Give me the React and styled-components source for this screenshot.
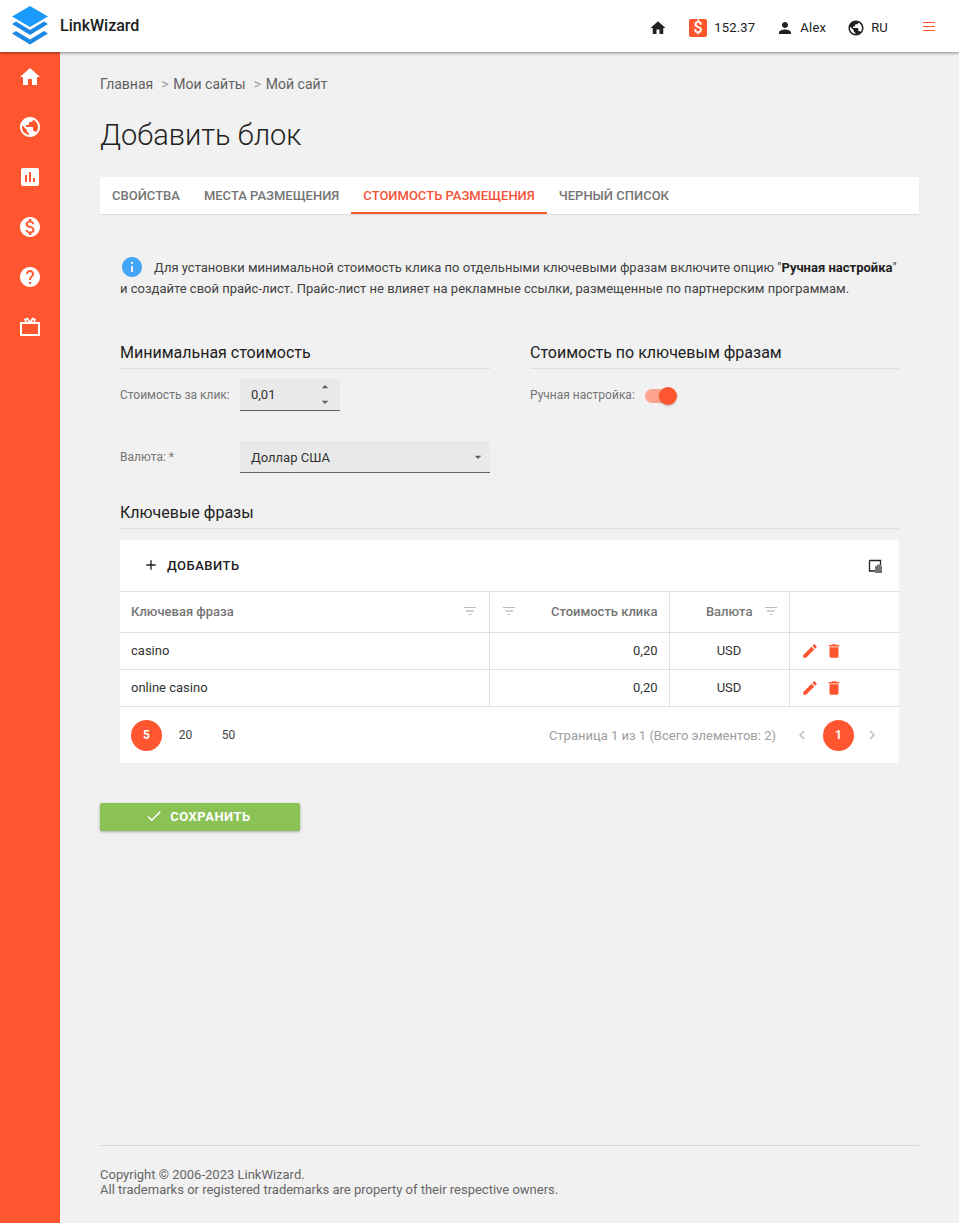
import React from "react";
import styled, { createGlobalStyle } from "styled-components";

const ORANGE = "#ff5630";

const GlobalStyle = createGlobalStyle`
  html, body { margin: 0; padding: 0; }
  body {
    background: #f1f1f1;
    font-family: Roboto, "Noto Sans", sans-serif;
    color: #212121;
  }
  * { box-sizing: border-box; }
`;

const paths = {
  home: "M10 20v-6h4v6h5v-8h3L12 3 2 12h3v8z",
  globe: "M12 2C6.48 2 2 6.48 2 12s4.48 10 10 10 10-4.48 10-10S17.52 2 12 2zm-1 17.93c-3.95-.49-7-3.85-7-7.93 0-.62.08-1.21.21-1.79L9 15v1c0 1.1.9 2 2 2v1.93zm6.9-2.54c-.26-.81-1-1.39-1.9-1.39h-1v-3c0-.55-.45-1-1-1H8v-2h2c.55 0 1-.45 1-1V7h2c1.1 0 2-.9 2-2v-.41c2.93 1.19 5 4.06 5 7.41 0 2.08-.8 3.97-2.1 5.39z",
  chart: "M19 3H5c-1.1 0-2 .9-2 2v14c0 1.1.9 2 2 2h14c1.1 0 2-.9 2-2V5c0-1.1-.9-2-2-2zM9 17H7v-7h2v7zm4 0h-2V7h2v10zm4 0h-2v-4h2v4z",
  money: "M12 2C6.48 2 2 6.48 2 12s4.48 10 10 10 10-4.48 10-10S17.52 2 12 2zm1.41 16.09V20h-2.67v-1.93c-1.71-.36-3.16-1.46-3.27-3.4h1.96c.1 1.05.82 1.87 2.65 1.87 1.96 0 2.4-.98 2.4-1.59 0-.83-.44-1.61-2.67-2.14-2.48-.6-4.18-1.62-4.18-3.67 0-1.72 1.39-2.84 3.11-3.21V4h2.67v1.95c1.86.45 2.79 1.86 2.85 3.39H14.3c-.05-1.11-.64-1.87-2.22-1.87-1.5 0-2.4.68-2.4 1.64 0 .84.65 1.39 2.67 1.91s4.18 1.39 4.18 3.91c-.01 1.83-1.38 2.83-3.12 3.16z",
  help: "M12 2C6.48 2 2 6.48 2 12s4.48 10 10 10 10-4.48 10-10S17.52 2 12 2zm1 17h-2v-2h2v2zm2.07-7.75l-.9.92C13.45 12.9 13 13.5 13 15h-2v-.5c0-1.1.45-2.1 1.17-2.83l1.24-1.26c.37-.36.59-.86.59-1.41 0-1.1-.9-2-2-2s-2 .9-2 2H8c0-2.21 1.79-4 4-4s4 1.79 4 4c0 .88-.36 1.68-.93 2.25z",
  person: "M12 12c2.21 0 4-1.79 4-4s-1.79-4-4-4-4 1.79-4 4 1.79 4 4 4zm0 2c-2.67 0-8 1.34-8 4v2h16v-2c0-2.66-5.33-4-8-4z",
  edit: "M3 17.25V21h3.75L17.81 9.94l-3.75-3.75L3 17.25zM20.71 7.04c.39-.39.39-1.02 0-1.41l-2.34-2.34c-.39-.39-1.02-.39-1.41 0l-1.83 1.83 3.75 3.75 1.83-1.83z",
  trash: "M6 19c0 1.1.9 2 2 2h8c1.1 0 2-.9 2-2V7H6v12zM19 4h-3.5l-1-1h-5l-1 1H5v2h14V4z",
  check: "M9 16.17L4.83 12l-1.42 1.41L9 19 21 7l-1.41-1.41z",
  add: "M19 13h-6v6h-2v-6H5v-2h6V5h2v6h6v2z",
  left: "M15.41 7.41L14 6l-6 6 6 6 1.41-1.41L10.83 12z",
  right: "M10 6L8.59 7.41 13.17 12l-4.58 4.59L10 18l6-6z",
  filter: "M3 6h18v1.300H3zM6 11.350h12v1.300H6zM10 16.700h4v1.300h-4z",
  info: "M12 2C6.48 2 2 6.48 2 12s4.48 10 10 10 10-4.48 10-10S17.52 2 12 2zm1 15h-2v-6h2v6zm0-8h-2V7h2v2z",
  dropdown: "M7 10l5 5 5-5z",
  dropup: "M7 14l5-5 5 5z",
};

const Svg = styled.svg`
  display: block;
  flex: none;
  fill: currentColor;
`;

const Icon = ({ name, size = 24 }) => (
  <Svg viewBox="0 0 24 24" width={size} height={size}>
    <path d={paths[name]} />
  </Svg>
);

const GiftIcon = () => (
  <svg viewBox="0 0 24 24" width="24" height="24" fill="none" stroke="currentColor" strokeWidth="2" style={{ display: "block" }}>
    <path d="M3 8h18v12H3z" />
    <path d="M12 8 9.500 3.500 7 4.500 8.500 8M12 8l2.500-4.500L17 4.500 15.500 8" strokeWidth="1.700" />
  </svg>
);

const ColumnsIcon = () => (
  <svg viewBox="0 0 16 16" width="16" height="16" style={{ display: "block" }}>
    <path d="M2.500 2.500h11v5M8 13H2.500V2.500" fill="none" stroke="#212121" strokeWidth="1.300" />
    <path d="M8 8h7v7H8z" fill="#757575" />
    <path d="M10 6.500h3V8h-3z" fill="#757575" />
  </svg>
);

const Page = styled.div`
  display: flex;
  flex-direction: column;
  min-height: 1223px;
`;

const Header = styled.header`
  position: relative;
  z-index: 2;
  height: 52px;
  display: flex;
  align-items: center;
  background: #fff;
  box-shadow: 0 1px 3px rgba(0, 0, 0, 0.45);
  padding: 0 24px 0 11px;
`;

const Brand = styled.div`
  font-size: 16px;
  font-weight: 500;
  color: #1c1c1c;
  margin-left: 11px;
  margin-right: auto;
  padding-bottom: 1px;
`;

const HeaderItem = styled.div`
  display: flex;
  align-items: center;
  gap: ${(p) => p.$gap || 6}px;
  margin-left: ${(p) => p.$left}px;
  font-size: 13px;
  letter-spacing: 0.2px;
  color: #212121;
  padding-top: 3px;
`;

const DollarBox = styled.span`
  width: 18px;
  height: 18px;
  border-radius: 2px;
  background: ${ORANGE};
  color: #fff;
  font-size: 16px;
  font-weight: 500;
  line-height: 18px;
  text-align: center;
`;

const Burger = styled.span`
  display: block;
  position: relative;
  width: 12px;
  height: 9px;
  margin: 1px 0 0 35px;
  border-top: 1px solid ${ORANGE};
  border-bottom: 1px solid ${ORANGE};
  &::after {
    content: "";
    position: absolute;
    left: 0;
    right: 0;
    top: 3px;
    height: 1px;
    background: ${ORANGE};
  }
`;

const Body = styled.div`
  flex: 1;
  display: flex;
`;

const Sidebar = styled.nav`
  width: 60px;
  flex: none;
  background: ${ORANGE};
  color: #fff;
`;

const SideItem = styled.div`
  height: 50px;
  display: flex;
  align-items: center;
  justify-content: center;
`;

const Main = styled.main`
  flex: 1;
  min-width: 0;
  display: flex;
  flex-direction: column;
  padding: 24px 40px 26px;
`;

const Breadcrumbs = styled.div`
  display: flex;
  font-size: 14px;
  line-height: 16px;
  color: #616161;
`;

const Crumb = styled.span`
  &:not(:first-child)::before {
    content: ">";
    color: #9e9e9e;
    margin: 0 4.900px 0 7.900px;
  }
`;

const Title = styled.h1`
  margin: 26px 0 24px;
  font-size: 29px;
  line-height: 35px;
  font-weight: 300;
  color: #212121;
`;

const Tabs = styled.div`
  display: flex;
  height: 37px;
  background: #fff;
  box-shadow: 0 1px 1px rgba(0, 0, 0, 0.08);
`;

const Tab = styled.div`
  padding: 0 12px;
  font-size: 13px;
  line-height: 37px;
  font-weight: 500;
  text-transform: uppercase;
  color: ${(p) => (p.$active ? "#f4533a" : "#757575")};
  border-bottom: 2px solid ${(p) => (p.$active ? ORANGE : "transparent")};
`;

const Content = styled.div`
  padding: 43px 20px 0;
`;

const Info = styled.p`
  margin: 0;
  font-size: 13px;
  line-height: 21px;
  color: #424242;
  b { font-weight: 700; color: #212121; }
`;

const InfoIcon = styled.span`
  display: inline-block;
  height: 14px;
  vertical-align: -2px;
  margin-right: 10px;
  color: #42a5f5;
  & > svg { margin-top: -5px; }
`;

const Columns = styled.div`
  display: grid;
  grid-template-columns: 370px 369px;
  column-gap: 40px;
  margin-top: 44px;
`;

const SectionTitle = styled.h2`
  margin: 0;
  height: 26px;
  font-size: 16px;
  line-height: 19px;
  font-weight: 400;
  color: #212121;
  border-bottom: 1px solid #dedede;
`;

const Row = styled.div`
  display: flex;
  align-items: center;
  margin-top: ${(p) => p.$top}px;
`;

const Label = styled.span`
  width: 120px;
  flex: none;
  font-size: 12px;
  color: #757575;
`;

const NumberField = styled.div`
  width: 100px;
  height: 32px;
  display: flex;
  align-items: center;
  justify-content: space-between;
  padding: 0 7px 0 11px;
  background: #e9e9e9;
  border-bottom: 1px solid #616161;
  font-size: 13px;
  color: #333;
`;

const Spinner = styled.span`
  display: flex;
  flex-direction: column;
  gap: 1px;
  color: #616161;
  & > svg { margin: -1px 0; }
`;

const SelectField = styled(NumberField)`
  width: 250px;
  padding: 1px 4px 0 11px;
  & > svg { color: #616161; }
`;

const SwitchLabel = styled.span`
  font-size: 12px;
  color: #757575;
`;

const Switch = styled.span`
  position: relative;
  display: block;
  width: 27px;
  height: 14px;
  margin: 3px 0 0 10px;
  border-radius: 7px;
  background: #ffa48e;
`;

const Thumb = styled.span`
  position: absolute;
  top: -2px;
  right: -5px;
  width: 18px;
  height: 18px;
  border-radius: 50%;
  background: ${ORANGE};
  box-shadow: 0 1px 2px rgba(0, 0, 0, 0.25);
`;

const KeywordsTitle = styled(SectionTitle)`
  margin-top: 30px;
`;

const Card = styled.div`
  margin-top: 11px;
  background: #fff;
`;

const Toolbar = styled.div`
  height: 51px;
  display: flex;
  align-items: center;
  justify-content: space-between;
  padding: 0 16px 0 23px;
`;

const AddButton = styled.div`
  display: flex;
  align-items: center;
  gap: 8px;
  margin-top: -1px;
  font-size: 13px;
  font-weight: 500;
  letter-spacing: 0.5px;
  text-transform: uppercase;
  color: #212121;
`;

const Grid = styled.table`
  width: 100%;
  table-layout: fixed;
  border-collapse: collapse;
  font-size: 13px;
  border-top: 1px solid #e0e0e0;
`;

const Th = styled.th`
  height: 41px;
  padding: 0 11px 2px;
  font-weight: 500;
  color: #757575;
  border-bottom: 1px solid #e0e0e0;
  & + & { border-left: 1px solid #e0e0e0; }
`;

const HeadInner = styled.div`
  display: flex;
  align-items: center;
  justify-content: ${(p) => p.$justify || "space-between"};
  gap: 10px;
  margin-right: ${(p) => (p.$justify ? -1 : 0)}px;
  color: #757575;
  & > svg { color: #a6a6a6; }
`;

const Td = styled.td`
  height: 37px;
  padding: 0 11px 2px;
  color: #333;
  text-align: ${(p) => p.$align || "left"};
  border-bottom: 1px solid #e0e0e0;
  & + & { border-left: 1px solid #e0e0e0; }
`;

const Actions = styled.div`
  display: flex;
  gap: 6px;
  margin-top: 2px;
  color: ${ORANGE};
`;

const Pager = styled.div`
  height: 56px;
  display: flex;
  align-items: center;
  padding: 0 11px;
  font-size: 12px;
  color: #424242;
`;

const PageCircle = styled.span`
  width: 31px;
  height: 31px;
  flex: none;
  display: flex;
  align-items: center;
  justify-content: center;
  border-radius: 50%;
  background: ${ORANGE};
  color: #fff;
  font-weight: 700;
`;

const PageSize = styled.span`
  width: 43px;
  text-align: center;
  &:nth-child(2) { margin-left: 2px; }
`;

const PageInfo = styled.span`
  margin-left: auto;
  margin-right: 12px;
  font-size: 13px;
  color: #9e9e9e;
`;

const PageArrow = styled.span`
  color: #bdbdbd;
  margin: 0 ${(p) => p.$right}px 0 ${(p) => p.$left}px;
`;

const SaveButton = styled.div`
  width: 200px;
  height: 28px;
  margin-top: 40px;
  padding: 0 4px 2px 0;
  display: flex;
  align-items: center;
  justify-content: center;
  gap: 7px;
  background: #8bc255;
  border-radius: 2px;
  box-shadow: 0 1px 3px rgba(0, 0, 0, 0.3);
  color: #fff;
  font-size: 13px;
  font-weight: 700;
  letter-spacing: 0.5px;
  text-transform: uppercase;
`;

const Footer = styled.footer`
  margin-top: auto;
  padding-top: 21px;
  border-top: 1px solid #d8d8d8;
  font-size: 13px;
  line-height: 15px;
  color: #666;
`;

const Logo = () => (
  <svg width="38" height="42" viewBox="0 0 38 42" style={{ flex: "none" }}>
    <path d="M19 1 37 11.500 19 22 1 11.500z" fill="#1a9bfc" />
    <path d="M5 16.500 19 25 33 16.500 37 19 19 30 1 19z" fill="#1e88e5" />
    <path d="M5 26 19 34.500 33 26 37 28.500 19 39.500 1 28.500z" fill="#1e88e5" />
  </svg>
);

const sideNav = ["home", "globe", "chart", "money", "help"];

const keywords = ["casino", "online casino"];

export default function App() {
  return (
    <Page>
      <GlobalStyle />
      <Header>
        <Logo />
        <Brand>LinkWizard</Brand>
        <HeaderItem><Icon name="home" size={18} /></HeaderItem>
        <HeaderItem $left={22} $gap={7}><DollarBox>$</DollarBox>152.37</HeaderItem>
        <HeaderItem $left={21}><Icon name="person" size={18} />Alex</HeaderItem>
        <HeaderItem $left={21}><Icon name="globe" size={18} />RU</HeaderItem>
        <Burger />
      </Header>
      <Body>
        <Sidebar>
          {sideNav.map((name) => (
            <SideItem key={name}><Icon name={name} /></SideItem>
          ))}
          <SideItem><GiftIcon /></SideItem>
        </Sidebar>
        <Main>
          <Breadcrumbs>
            <Crumb>Главная</Crumb>
            <Crumb>Мои сайты</Crumb>
            <Crumb>Мой сайт</Crumb>
          </Breadcrumbs>
          <Title>Добавить блок</Title>
          <Tabs>
            <Tab>Свойства</Tab>
            <Tab>Места размещения</Tab>
            <Tab $active>Стоимость размещения</Tab>
            <Tab>Черный список</Tab>
          </Tabs>
          <Content>
            <Info>
              <InfoIcon><Icon name="info" /></InfoIcon>
              Для установки минимальной стоимость клика по отдельными ключевыми фразам включите опцию "<b>Ручная настройка</b>" и создайте свой прайс-лист. Прайс-лист не влияет на рекламные ссылки, размещенные по партнерским программам.
            </Info>
            <Columns>
              <div>
                <SectionTitle>Минимальная стоимость</SectionTitle>
                <Row $top={10}>
                  <Label>Стоимость за клик:</Label>
                  <NumberField>
                    0,01
                    <Spinner>
                      <Icon name="dropup" size={16} />
                      <Icon name="dropdown" size={16} />
                    </Spinner>
                  </NumberField>
                </Row>
                <Row $top={30}>
                  <Label>Валюта: *</Label>
                  <SelectField>
                    Доллар США
                    <Icon name="dropdown" size={16} />
                  </SelectField>
                </Row>
              </div>
              <div>
                <SectionTitle>Стоимость по ключевым фразам</SectionTitle>
                <Row $top={17}>
                  <SwitchLabel>Ручная настройка:</SwitchLabel>
                  <Switch><Thumb /></Switch>
                </Row>
              </div>
            </Columns>
            <KeywordsTitle>Ключевые фразы</KeywordsTitle>
            <Card>
              <Toolbar>
                <AddButton><Icon name="add" size={16} />Добавить</AddButton>
                <ColumnsIcon />
              </Toolbar>
              <Grid>
                <colgroup>
                  <col style={{ width: 369 }} />
                  <col style={{ width: 180 }} />
                  <col style={{ width: 120 }} />
                  <col />
                </colgroup>
                <thead>
                  <tr>
                    <Th><HeadInner>Ключевая фраза<Icon name="filter" size={16} /></HeadInner></Th>
                    <Th><HeadInner><Icon name="filter" size={16} />Стоимость клика</HeadInner></Th>
                    <Th><HeadInner $justify="flex-end">Валюта<Icon name="filter" size={16} /></HeadInner></Th>
                    <Th />
                  </tr>
                </thead>
                <tbody>
                  {keywords.map((k) => (
                    <tr key={k}>
                      <Td>{k}</Td>
                      <Td $align="right">0,20</Td>
                      <Td $align="center">USD</Td>
                      <Td>
                        <Actions>
                          <Icon name="edit" size={18} />
                          <Icon name="trash" size={18} />
                        </Actions>
                      </Td>
                    </tr>
                  ))}
                </tbody>
              </Grid>
              <Pager>
                <PageCircle>5</PageCircle>
                <PageSize>20</PageSize>
                <PageSize>50</PageSize>
                <PageInfo>Страница 1 из 1 (Всего элементов: 2)</PageInfo>
                <PageArrow $left={5} $right={12}><Icon name="left" size={18} /></PageArrow>
                <PageCircle>1</PageCircle>
                <PageArrow $left={9} $right={7}><Icon name="right" size={18} /></PageArrow>
              </Pager>
            </Card>
          </Content>
          <SaveButton><Icon name="check" size={18} />Сохранить</SaveButton>
          <Footer>
            Copyright © 2006-2023 LinkWizard.<br />
            All trademarks or registered trademarks are property of their respective owners.
          </Footer>
        </Main>
      </Body>
    </Page>
  );
}
